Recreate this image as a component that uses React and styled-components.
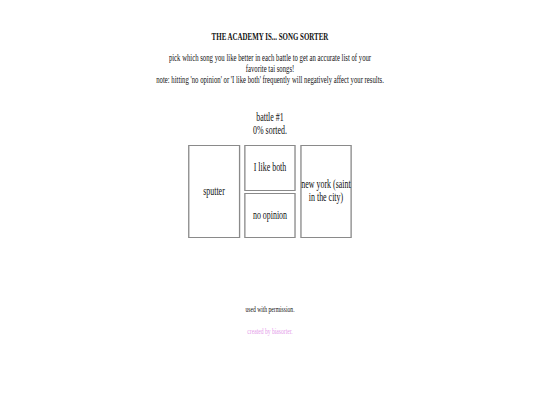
import styled, { createGlobalStyle } from 'styled-components'

const GlobalStyle = createGlobalStyle`
	html, body {
		margin: 0;
		padding: 0;
		background: #ffffff;
		overflow: hidden;
	}
`

// the page is drawn narrow: a wide layout squeezed horizontally
const SCALE = 0.66

const StyledStage = styled.div`
	width: ${540 / SCALE}px;
	height: 405px;
	transform: scaleX(${SCALE});
	transform-origin: 0 0;
	display: flex;
	flex-direction: column;
	align-items: center;
	font-family: 'Liberation Serif', 'Times New Roman', serif;
	color: #111111;
	text-align: center;
`

const StyledTitle = styled.h1`
	margin: 31px 0 0;
	font-size: 10.5px;
	line-height: 12px;
	font-weight: 700;
	text-transform: uppercase;
`

const StyledIntro = styled.p`
	margin: 9px 0 0;
	font-size: 10.2px;
	line-height: 11px;
`

const StyledStatus = styled.div`
	margin-top: 26px;
	font-size: 12px;
	line-height: 13px;
`

const StyledBattle = styled.div`
	margin-top: 7.5px;
	display: flex;
	gap: ${4 / SCALE}px;
	height: 93px;
`

const StyledMiddle = styled.div`
	display: flex;
	flex-direction: column;
	gap: 2px;
`

const StyledChoice = styled.button`
	box-sizing: border-box;
	width: ${52 / SCALE}px;
	height: ${(p) => p.$height}px;
	padding: 0;
	display: flex;
	align-items: center;
	justify-content: center;
	background: #ffffff;
	border-style: solid;
	border-color: #8a8a8a;
	border-width: 1px 2px;
	font-family: inherit;
	font-size: 12px;
	line-height: 13px;
	color: #111111;
	cursor: pointer;
`

const StyledFooter = styled.div`
	margin-top: 66px;
	font-size: 8.5px;
	line-height: 10px;
`

const StyledCredit = styled.div`
	margin-top: 12px;
	font-size: 8.5px;
	line-height: 10px;
	color: #e49be9;
`

const App = () => {
	return (
		<>
			<GlobalStyle />
			<StyledStage>
				<StyledTitle>The Academy Is... song sorter</StyledTitle>
				<StyledIntro>
					pick which song you like better in each battle to get an accurate list of your
					<br />
					favorite tai songs!
					<br />
					note: hitting 'no opinion' or 'I like both' frequently will negatively affect your results.
				</StyledIntro>
				<StyledStatus>
					battle #1
					<br />
					0% sorted.
				</StyledStatus>
				<StyledBattle>
					<StyledChoice $height={93}>sputter</StyledChoice>
					<StyledMiddle>
						<StyledChoice $height={46}>I like both</StyledChoice>
						<StyledChoice $height={45}>no opinion</StyledChoice>
					</StyledMiddle>
					<StyledChoice $height={93}>new york (saint in the city)</StyledChoice>
				</StyledBattle>
				<StyledFooter>used with permission.</StyledFooter>
				<StyledCredit>created by biasorter.</StyledCredit>
			</StyledStage>
		</>
	)
}

export default App
